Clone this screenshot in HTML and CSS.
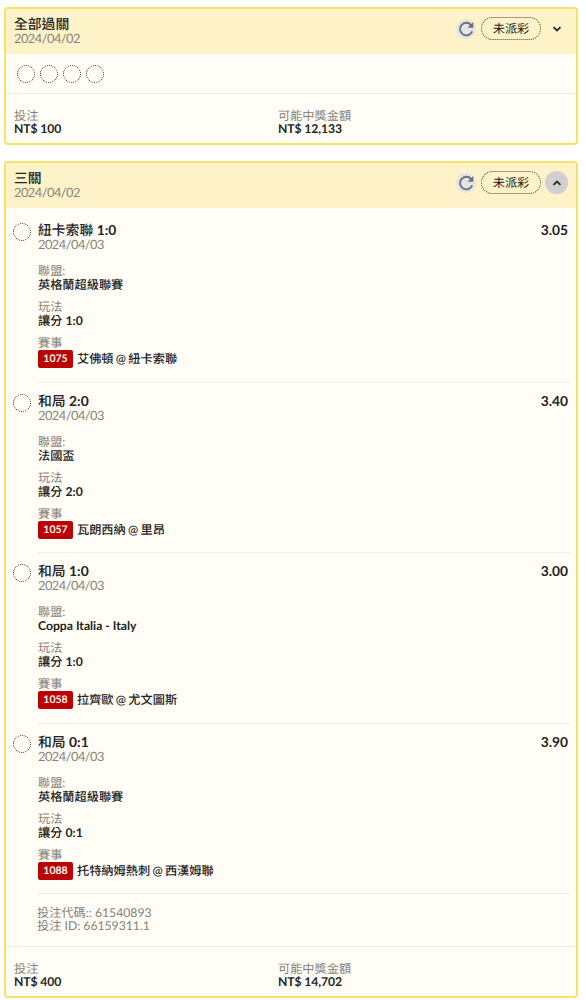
FILE: index.html
```
<!DOCTYPE html>
<html lang="zh-Hant">
<head>
    <meta charset="UTF-8">
    <meta name="viewport" content="width=device-width, initial-scale=1.0">
    <title>投注紀錄</title>
    <link rel="stylesheet" href="styles.css">
</head>
<body>

    <svg class="sprite" width="0" height="0">
        <symbol id="refresh" viewBox="0 0 20 20">
            <path d="M16.200 12.400A6.300 6.300 0 1 1 15 5.800" fill="none" stroke="#6d7078" stroke-width="1.9"/>
            <path d="M17.300 3v5.800h-5.800z" fill="#6d7078"/>
        </symbol>
        <symbol id="chevron" viewBox="0 0 10 10">
            <path d="M1.5 3.2L5 6.5l3.500-3.300" fill="none" stroke="#2b2822" stroke-width="1.8"/>
        </symbol>
    </svg>

    <div class="card">
        <div class="card-header">
            <div>
                <h2>全部過關</h2>
                <p class="date">2024/04/02</p>
            </div>
            <div class="actions">
                <button class="refresh"><svg><use href="#refresh"/></svg></button>
                <span class="status">未派彩</span>
                <button class="toggle"><svg><use href="#chevron"/></svg></button>
            </div>
        </div>
        <div class="summary">
            <span class="circle"></span>
            <span class="circle"></span>
            <span class="circle"></span>
            <span class="circle"></span>
        </div>
        <div class="card-footer">
            <div>
                <p class="label">投注</p>
                <p class="value">NT$ 100</p>
            </div>
            <div>
                <p class="label">可能中獎金額</p>
                <p class="value">NT$ 12,133</p>
            </div>
        </div>
    </div>

    <div class="card">
        <div class="card-header">
            <div>
                <h2>三關</h2>
                <p class="date">2024/04/02</p>
            </div>
            <div class="actions">
                <button class="refresh"><svg><use href="#refresh"/></svg></button>
                <span class="status">未派彩</span>
                <button class="toggle open"><svg><use href="#chevron"/></svg></button>
            </div>
        </div>
        <div class="legs">
            <div class="leg">
                <span class="circle"></span>
                <div class="leg-body">
                    <div class="leg-title"><h3>紐卡索聯 <b>1:0</b></h3><b>3.05</b></div>
                    <p class="date">2024/04/03</p>
                    <div class="detail">
                        <p class="label">聯盟:</p>
                        <p class="value">英格蘭超級聯賽</p>
                    </div>
                    <div class="detail">
                        <p class="label">玩法</p>
                        <p class="value">讓分 <b>1:0</b></p>
                    </div>
                    <div class="detail">
                        <p class="label">賽事</p>
                        <p class="match"><span class="code">1075</span>艾佛頓 @ 紐卡索聯</p>
                    </div>
                </div>
            </div>
            <div class="leg">
                <span class="circle"></span>
                <div class="leg-body">
                    <div class="leg-title"><h3>和局 <b>2:0</b></h3><b>3.40</b></div>
                    <p class="date">2024/04/03</p>
                    <div class="detail">
                        <p class="label">聯盟:</p>
                        <p class="value">法國盃</p>
                    </div>
                    <div class="detail">
                        <p class="label">玩法</p>
                        <p class="value">讓分 <b>2:0</b></p>
                    </div>
                    <div class="detail">
                        <p class="label">賽事</p>
                        <p class="match"><span class="code">1057</span>瓦朗西納 @ 里昂</p>
                    </div>
                </div>
            </div>
            <div class="leg">
                <span class="circle"></span>
                <div class="leg-body">
                    <div class="leg-title"><h3>和局 <b>1:0</b></h3><b>3.00</b></div>
                    <p class="date">2024/04/03</p>
                    <div class="detail">
                        <p class="label">聯盟:</p>
                        <p class="value"><b>Coppa Italia - Italy</b></p>
                    </div>
                    <div class="detail">
                        <p class="label">玩法</p>
                        <p class="value">讓分 <b>1:0</b></p>
                    </div>
                    <div class="detail">
                        <p class="label">賽事</p>
                        <p class="match"><span class="code">1058</span>拉齊歐 @ 尤文圖斯</p>
                    </div>
                </div>
            </div>
            <div class="leg">
                <span class="circle"></span>
                <div class="leg-body">
                    <div class="leg-title"><h3>和局 <b>0:1</b></h3><b>3.90</b></div>
                    <p class="date">2024/04/03</p>
                    <div class="detail">
                        <p class="label">聯盟:</p>
                        <p class="value">英格蘭超級聯賽</p>
                    </div>
                    <div class="detail">
                        <p class="label">玩法</p>
                        <p class="value">讓分 <b>0:1</b></p>
                    </div>
                    <div class="detail">
                        <p class="label">賽事</p>
                        <p class="match"><span class="code">1088</span>托特納姆熱刺 @ 西漢姆聯</p>
                    </div>
                </div>
            </div>
        </div>
        <div class="bet-info">
            <p>投注代碼:: 61540893</p>
            <p>投注 ID: 66159311.1</p>
        </div>
        <div class="card-footer">
            <div>
                <p class="label">投注</p>
                <p class="value">NT$ 400</p>
            </div>
            <div>
                <p class="label">可能中獎金額</p>
                <p class="value">NT$ 14,702</p>
            </div>
        </div>
    </div>

</body>
</html>
```
FILE: styles.css
```
* {
    margin: 0;
    padding: 0;
    box-sizing: border-box;
}

body {
    font-family: Lato, "Noto Sans CJK TC", sans-serif;
    font-size: 12.2px;
    line-height: 14px;
    text-rendering: geometricPrecision;
    color: #24231f;
    background-color: white;
    padding: 7px 7px 0 4px;
    height: 1000px;
    overflow: hidden;
}

.sprite {
    display: block;
}

.card {
    border: 2px solid #f9e166;
    border-radius: 4px;
    background-color: #fffdf5;
    margin-bottom: 16px;
}

.card-header {
    display: flex;
    justify-content: space-between;
    height: 45px;
    padding: 8px 8px 0 8px;
    background-color: #fef2c8;
}

h2, h3 {
    font-size: 13.8px;
    line-height: 14px;
    font-weight: 500;
}

b {
    font-weight: 700;
}

.date {
    font-size: 12.8px;
    line-height: 14px;
    letter-spacing: -0.5px;
    color: #85827b;
}

.actions {
    display: flex;
    align-items: center;
    height: 23px;
}

button {
    display: flex;
    align-items: center;
    justify-content: center;
    border: none;
    border-radius: 50%;
    background: none;
    cursor: pointer;
}

.refresh {
    width: 20px;
    height: 20px;
    background-color: #e3e4e5;
}

.refresh svg {
    width: 20px;
    height: 20px;
}

.status {
    width: 60px;
    height: 23px;
    margin: 0 4px 0 5px;
    border: 1px dotted #4c4534;
    border-radius: 12px;
    line-height: 21px;
    text-align: center;
}

.toggle {
    width: 23px;
    height: 23px;
}

.toggle svg {
    width: 10px;
    height: 10px;
}

.toggle.open {
    background-color: #d0cfd2;
}

.open svg {
    transform: rotate(180deg);
}

.circle {
    flex: none;
    width: 18px;
    height: 18px;
    border: 1px dotted #2c2a25;
    border-radius: 50%;
}

.summary {
    display: flex;
    align-items: center;
    gap: 5px;
    height: 39px;
    padding-left: 11px;
}

.card-footer {
    display: grid;
    grid-template-columns: 264px 1fr;
    height: 50px;
    padding: 15px 8px 0 8px;
    border-top: 1px solid #f1ece6;
    line-height: 13px;
}

.label {
    color: #85827b;
}

.value {
    font-weight: 500;
}

.card-footer .value {
    font-weight: 700;
    letter-spacing: -0.1px;
}

.legs {
    padding: 4px 6px 0 7px;
}

.leg {
    display: flex;
    gap: 7px;
    height: 170.5px;
}

.leg .circle {
    margin-top: 11px;
}

.leg-body {
    flex: 1;
    padding-top: 11px;
    border-bottom: 1px solid #f1ece6;
}

.leg-title {
    display: flex;
    justify-content: space-between;
    padding-right: 2px;
    font-size: 13.8px;
}

.leg .date {
    margin-bottom: 13px;
}

.detail {
    margin-bottom: 8px;
}

.match {
    display: flex;
    align-items: center;
    height: 18px;
    font-weight: 500;
    word-spacing: -0.8px;
}

.code {
    width: 35px;
    height: 18px;
    margin-right: 4px;
    border-radius: 2px;
    background-color: #ba0307;
    color: #fff6ee;
    font-size: 10.5px;
    font-weight: 700;
    line-height: 18px;
    text-align: center;
}

.bet-info {
    height: 52px;
    padding: 12px 0 0 31px;
    line-height: 13px;
    color: #85827b;
}
```
